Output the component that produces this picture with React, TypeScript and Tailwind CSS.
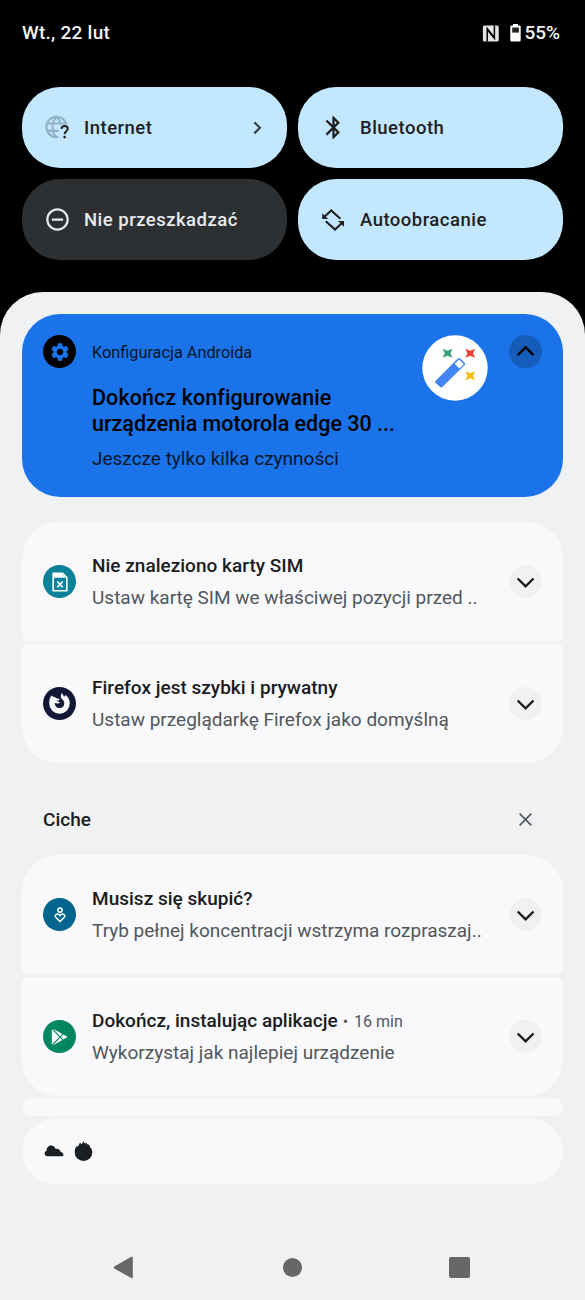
import type { ReactNode } from "react";
import clsx from "clsx";
import { MdBluetooth, MdRemoveCircleOutline, MdSettings } from "react-icons/md";

type TileProps = { icon: ReactNode; label: string; active?: boolean; arrow?: boolean };

function Tile({ icon, label, active = true, arrow = false }: TileProps) {
    return (
        <button
            className={clsx(
                "flex h-[81px] items-center rounded-[38px] px-[22px] text-left",
                active ? "bg-[#c2e7ff] text-[#1f1f1f]" : "bg-[#2d3033] text-[#e8eaed]"
            )}
        >
            <span className="flex w-10 shrink-0 items-center">{icon}</span>
            <span className="grow pt-[2px] text-[18.5px] font-medium tracking-[0.48px] whitespace-nowrap">{label}</span>
            {arrow && (
                <svg className="mr-px h-[14px] w-[14px]" viewBox="0 0 14 14" fill="none" stroke="#3f4850" strokeWidth="2.3">
                    <path d="M4.3 1.2 9.900 6.8 4.300 12.4" />
                </svg>
            )}
        </button>
    );
}

function InternetIcon() {
    return (
        <svg className="h-[27px] w-[27px]" viewBox="0 0 27 27" fill="none">
            <g stroke="#8fb3c4" strokeWidth="2.1">
                <path d="M14.2 23.3H12.7A10.3 10.3 0 1 1 22.6 10.5" />
                <path d="M12.7 3C9.8 5.7 8.5 9.3 8.5 13.2S9.8 20.7 12.7 23.3M12.7 3C14.9 5 16.3 7.5 16.8 10.3" />
                <path d="M3.3 9.5H22M3.3 16.9H14.6" />
            </g>
            <path d="M17.4 14.8C17.6 12.9 18.8 12 20.6 12S23.8 13 23.8 14.8C23.8 17.2 20.6 17.4 20.6 20.3" stroke="#1f1f1f" strokeWidth="1.9" />
            <circle cx="20.6" cy="23.1" r="1.3" fill="#1f1f1f" />
        </svg>
    );
}

function RotateIcon() {
    return (
        <svg className="h-[26px] w-[26px]" viewBox="0 0 26 26" fill="none" stroke="currentColor" strokeWidth="2.1">
            <path d="M20.4 11.7 11.2 3.4 4.5 9.8M5.8 14.2 15 22.6 21.7 16.2" />
            <path d="M2.2 6.2V12H8.2ZM24 19.8V14H18Z" fill="currentColor" stroke="none" />
        </svg>
    );
}

function NfcIcon() {
    return (
        <svg className="mr-[11px] h-[17px] w-[17px]" viewBox="0 0 17 17">
            <rect x=".9" y=".4" width="15.8" height="16.2" rx="1.5" fill="#e3e5e8" />
            <path d="M5.2 16.6V3.6L11.200 11M12.400.4V13.4L6.400 6" fill="none" stroke="#000" strokeWidth="1.500" />
        </svg>
    );
}

function BatteryIcon() {
    return (
        <svg className="mr-[3px] h-[18px] w-[11px]" viewBox="0 0 11 18">
            <path d="M3 0H8V1.6H9.5Q10.7 1.6 10.7 2.8V16.3Q10.7 17.5 9.5 17.5H1.5Q.3 17.5.3 16.3V2.8Q.3 1.6 1.5 1.6H3Z" fill="#fff" />
            <path d="M2.2 3.5H8.9V8.6H2.2Z" fill="#222" />
        </svg>
    );
}

function Badge({ color, children }: { color: string; children: ReactNode }) {
    return <span className={clsx("flex h-[33px] w-[33px] shrink-0 items-center justify-center rounded-full", color)}>{children}</span>;
}

function Chevron({ up = false }: { up?: boolean }) {
    return (
        <span
            className={clsx(
                "flex h-[33px] w-[33px] shrink-0 items-center justify-center rounded-full",
                up ? "bg-[#165cbb]" : "bg-[#eff1f3]"
            )}
        >
            <svg className="h-[12px] w-[20px]" viewBox="0 0 20 12" fill="none" stroke={up ? "#000" : "#1a1c1e"} strokeWidth="2.4">
                {up ? <path d="M1.7 9.2 9.6 1.3 17.5 9.2" /> : <path d="M1.7 2.500 9.6 10.3 17.5 2.500" />}
            </svg>
        </span>
    );
}

type NotificationProps = {
    icon: ReactNode;
    title: string;
    text: string;
    time?: string;
    last?: boolean;
};

function Notification({ icon, title, text, time, last = false }: NotificationProps) {
    return (
        <div
            className={clsx(
                "flex h-[119px] items-center bg-[#f9f9fc] px-[21px]",
                last ? "rounded-t-[5px] rounded-b-[36px]" : "rounded-t-[36px] rounded-b-[5px]"
            )}
        >
            {icon}
            <div className="ml-4 grow text-[19px] whitespace-nowrap">
                <p className="flex h-8 items-center pt-[2px] text-[#1a1c1e]">
                    <span className="font-medium tracking-[0.01px]">{title}</span>
                    {time && (
                        <span className="ml-[5px] text-[16px] text-[#51565b]">
                            <span className="mr-[6px]">•</span>
                            {time}
                        </span>
                    )}
                </p>
                <p className="h-8 leading-8 text-[#51565b]">{text}</p>
            </div>
            <Chevron />
        </div>
    );
}

function SimIcon() {
    return (
        <svg className="h-5 w-4" viewBox="0 0 16 20" fill="none" stroke="#fff" strokeWidth="1.6">
            <path d="M1.2 1.3H10.5L14.8 5.5V18.7H1.2Z" />
            <path d="M2 2H10.2L13.8 5.8H2Z" fill="#fff" stroke="none" />
            <path d="M5.2 9.5 10.8 15.3M10.8 9.5 5.2 15.3" />
        </svg>
    );
}

function FirefoxIcon() {
    return (
        <svg className="h-[33px] w-[33px]" viewBox="0 0 33 33">
            <path
                d="M8.4 8.500 10 9.600 12 10.300 13.500 11.300 16.800 11.900C16.400 13 15.300 13.500 13.900 13.600 14.500 14.600 15.800 15 17 14.900 16.500 16.400 14.300 16.800 11.700 15.900 11.800 18.900 13.900 21 16.600 21 19.300 21 21.300 19 21.300 16.500 21.300 14.600 20.500 13.400 19.300 12.500 17.600 11.100 17.200 8.300 18.900 5.700 19.500 7.600 20.600 8.500 21.500 9.700L22.300 8.100C25.100 9.900 26.800 12.900 26.800 16.500A10.300 10.300 0 0 1 6.200 16.500C6.200 13 6.900 10.700 8.400 8.500Z"
                fill="#f9f9fc"
            />
        </svg>
    );
}

function WellbeingIcon() {
    return (
        <svg className="h-4 w-3" viewBox="0 0 12 16" fill="none" stroke="#fff" strokeWidth="1.5">
            <circle cx="6" cy="3.1" r="2.1" />
            <path d="M6 14.5 1.7 10.2C-.1 7.9 3.8 5.5 6 8.7 8.2 5.5 12.1 7.9 10.3 10.2Z" />
        </svg>
    );
}

function PlayIcon() {
    return (
        <svg className="h-[18px] w-[18px]" viewBox="0 0 18 18" fill="#f9f9fc">
            <path d="M.8 1.2V16.8L8.3 9ZM1.8.6 9.1 8.2 11.4 5.9ZM12.4 6.5 9.9 9 12.4 11.5 16.7 9ZM9.1 9.8 1.8 17.4 11.4 12.1Z" />
        </svg>
    );
}

function SetupWandIcon() {
    return (
        <svg className="h-[66px] w-[66px] shrink-0" viewBox="0 0 66 66">
            <circle cx="33" cy="33" r="32.7" fill="#fff" />
            <path d="M13 46.5 35.6 23.8Q37.1 22.3 38.6 23.8L42.6 27.8Q43.7 29 42.5 30.2L19.8 52.6 18.5 52.2 13.2 47.5Z" fill="#4285f4" />
            <path d="M37.1 24.5 41.8 29.2 37.4 33.4 32.7 28.7Z" fill="#fff" />
            <path d="M20.7 13.7 25.6 15.8 30.5 13.7 28.4 18.3 30.5 22.8 25.6 20.7 20.7 22.8 22.8 18.3Z" fill="#34a172" />
            <path d="M43.3 13.7 48.2 15.8 53.1 13.7 51 18.3 53.1 22.8 48.2 20.7 43.3 22.8 45.4 18.3Z" fill="#ea4335" />
            <path d="M43.3 36.2 48.2 38.3 53.1 36.2 51 40.8 53.1 45.3 48.2 43.2 43.3 45.3 45.4 40.8Z" fill="#fbbc14" />
        </svg>
    );
}

export default function App() {
    return (
        <div className="flex h-[1300px] w-[585px] flex-col overflow-hidden bg-black font-['Roboto',sans-serif]">
            {/* Status bar */}
            <header className="flex h-[87px] items-start justify-between pt-[21px] pr-[25px] pl-[22px] text-[19px] leading-6 font-medium text-[#f1f3f4]">
                <span className="tracking-[0.25px]">Wt., 22 lut</span>
                <span className="flex items-center">
                    <NfcIcon />
                    <BatteryIcon />
                    <span>55%</span>
                </span>
            </header>

            {/* Quick settings */}
            <section className="grid grid-cols-2 gap-[11px] px-[22px]">
                <Tile icon={<InternetIcon />} label="Internet" arrow />
                <Tile icon={<MdBluetooth className="h-[27px] w-[27px]" />} label="Bluetooth" />
                <Tile icon={<MdRemoveCircleOutline className="-ml-[0.5px] h-[27px] w-[27px]" />} label="Nie przeszkadzać" active={false} />
                <Tile icon={<RotateIcon />} label="Autoobracanie" />
            </section>

            {/* Notification shade */}
            <main className="mt-8 flex grow flex-col rounded-t-[43px] bg-[#eff1f3] px-[22px] pt-[22px]">
                <article className="flex h-[183px] items-start rounded-[38px] bg-[#1a73e8] px-[21px] pt-[21px] text-black">
                    <Badge color="bg-black">
                        <MdSettings className="h-[22px] w-[22px] text-[#1a73e8]" />
                    </Badge>
                    <div className="ml-4 grow whitespace-nowrap">
                        <p className="pt-px text-[16.3px] leading-[34px] text-[#07152b]">Konfiguracja Androida</p>
                        <p className="mt-[15px] text-[21.5px] leading-[25.5px] font-medium">
                            <span className="tracking-[0.08px]">Dokończ konfigurowanie</span>
                            <br />
                            urządzenia motorola edge 30 ...
                        </p>
                        <p className="mt-[9px] text-[19px] leading-7 text-[#07152b]">Jeszcze tylko kilka czynności</p>
                    </div>
                    <div className="mr-[21px]">
                        <SetupWandIcon />
                    </div>
                    <Chevron up />
                </article>

                <section className="mt-[25px] flex flex-col gap-[3px]">
                    <Notification
                        icon={<Badge color="bg-[#0b8299]"><SimIcon /></Badge>}
                        title="Nie znaleziono karty SIM"
                        text="Ustaw kartę SIM we właściwej pozycji przed .."
                    />
                    <Notification
                        icon={<Badge color="bg-[#131736]"><FirefoxIcon /></Badge>}
                        title="Firefox jest szybki i prywatny"
                        text="Ustaw przeglądarkę Firefox jako domyślną"
                        last
                    />
                </section>

                <div className="mt-[41px] flex h-8 items-center justify-between px-[21px]">
                    <h2 className="text-[19px] font-medium text-[#1a1c1e]">Ciche</h2>
                    <svg className="mr-[10px] mb-[2px] h-[13px] w-[13px]" viewBox="0 0 13 13" stroke="#555a60" strokeWidth="1.7">
                        <path d="M.7.7 12.3 12.3M12.3.7.7 12.3" />
                    </svg>
                </div>

                <section className="mt-[19px] flex flex-col gap-[3px]">
                    <Notification
                        icon={<Badge color="bg-[#01658f]"><WellbeingIcon /></Badge>}
                        title="Musisz się skupić?"
                        text="Tryb pełnej koncentracji wstrzyma rozpraszaj.."
                    />
                    <Notification
                        icon={<Badge color="bg-[#01875f]"><PlayIcon /></Badge>}
                        title="Dokończ, instalując aplikacje"
                        text="Wykorzystaj jak najlepiej urządzenie"
                        time="16 min"
                        last
                    />
                    <div className="-mt-px h-[18px] rounded-[9px] bg-[#f9f9fc]" />
                    <div className="flex h-[65px] items-center gap-[10px] rounded-[33px] bg-[#f9f9fc] pb-[2px] pl-[22px] text-[#1a1f22]">
                        <svg className="h-[12px] w-[20px]" viewBox="0 0 20 12" fill="currentColor">
                            <path d="M3 11.3A2.9 2.9 0 0 1 2.600 5.7C2.600 1.200 7-.9 10.300 1.800 11 2.400 11.200 3.100 11.700 3.900 14 3.200 15.900 4.500 16.500 6.700 18.300 7.200 19.500 8.600 19.500 10.200Q19.400 11.300 18.300 11.300Z" />
                        </svg>
                        <svg className="h-[20px] w-[19px]" viewBox="0 0 19 20" fill="currentColor">
                            <path d="M4.600 4.600 6 1.600 7.600 3.200 9.600.2 10.800 2.800 12.300 1.800 13.400 3.300 15.300 4 16 6C17.800 7.800 18.300 9.700 18.300 11.400A8.800 8.500 0 0 1 .7 11.400C.7 8.800 1.200 7.300 2.500 5.300L4 5.400Z" />
                        </svg>
                    </div>
                </section>

                {/* Navigation bar */}
                <nav className="mt-[72px] flex items-center text-[#666769]">
                    <svg className="ml-[91px] h-[23px] w-[20px]" viewBox="-0.5 -0.5 20 23" fill="currentColor">
                        <path d="M.8 10 17.8.3Q19.3-.2 19.3 1.5V20.5Q19.3 22.2 17.8 21.6L.8 12Q-.3 11 .8 10Z" />
                    </svg>
                    <span className="ml-[150px] h-[19px] w-[19px] rounded-full bg-current" />
                    <span className="ml-[147px] h-[21px] w-[21px] rounded-[2px] bg-current" />
                </nav>
            </main>
        </div>
    );
}
